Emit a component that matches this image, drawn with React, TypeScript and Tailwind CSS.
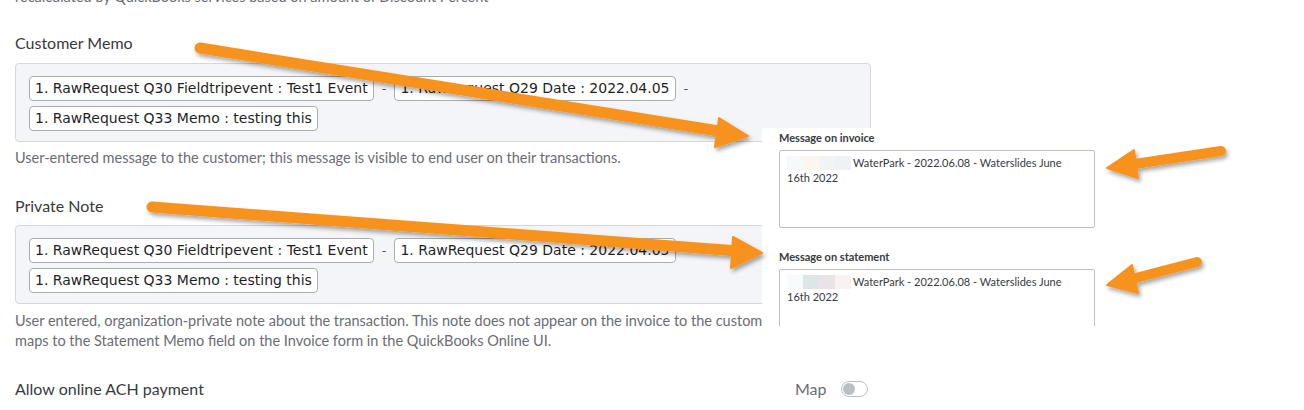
import React from "react";

const ui = { fontFamily: "Lato, 'Open Sans', sans-serif" };
const mono = { fontFamily: "'DejaVu Sans', Verdana, sans-serif" };

function Tag({ children }: { children: React.ReactNode }) {
  return (
    <span
      className="inline-flex h-[25px] items-center rounded-[4px] border border-[#a9acb1] bg-white px-[5px] text-[14px] text-[#1f1f1f] whitespace-nowrap"
      style={mono}
    >
      {children}
    </span>
  );
}

function Dash() {
  return (
    <span className="px-[8px] text-[13px] text-[#555]" style={mono}>
      -
    </span>
  );
}

function TagBox() {
  return (
    <div className="w-[856px] h-[79px] rounded-[4px] border border-[#d4d7dc] bg-[#f4f5f8] px-[13px] pt-[12px]">
      <div className="flex items-center">
        <Tag>1. RawRequest Q30 Fieldtripevent : Test1 Event</Tag>
        <Dash />
        <Tag>1. RawRequest Q29 Date : 2022.04.05</Tag>
        <Dash />
      </div>
      <div className="mt-[5px] flex items-center">
        <Tag>1. RawRequest Q33 Memo : testing this</Tag>
      </div>
    </div>
  );
}

function Redacted({ colors }: { colors: string[] }) {
  return (
    <span className="inline-flex h-[14px] align-[-3px] mr-[2px]">
      {colors.map((c, i) => (
        <span key={i} className="inline-block h-full w-[16px]" style={{ background: c }} />
      ))}
    </span>
  );
}

function MessageField({
  label,
  colors,
  h,
}: {
  label: string;
  colors: string[];
  h: string;
}) {
  return (
    <div>
      <div className="text-[11px] font-bold leading-[14px] text-[#393a3d]">{label}</div>
      <div
        className={`mt-[5px] w-[316px] ${h} rounded-[2px] border border-[#babec5] bg-white px-[7px] pt-[4px] text-[11px] leading-[15px] text-[#393a3d]`}
      >
        <Redacted colors={colors} />
        WaterPark - 2022.06.08 - Waterslides June 16th 2022
      </div>
    </div>
  );
}

function Arrows() {
  const fill = "#f7931e";
  return (
    <svg className="pointer-events-none absolute left-0 top-0" width="1304" height="410">
      <defs>
        <filter id="sh" x="-10%" y="-50%" width="120%" height="200%">
          <feDropShadow dx="2" dy="3" stdDeviation="2" floodColor="#000" floodOpacity="0.35" />
        </filter>
      </defs>
      <g filter="url(#sh)" fill={fill} stroke={fill} strokeLinecap="round" strokeLinejoin="round">
        <line x1="200" y1="48" x2="725" y2="132" strokeWidth="11" />
        <polygon points="748,136 719,118 715,147" strokeWidth="2" />
        <line x1="152" y1="207" x2="738" y2="251" strokeWidth="11" />
        <polygon points="762,253 733,237 731,268" strokeWidth="2" />
        <line x1="1221" y1="151" x2="1128" y2="165" strokeWidth="10" />
        <polygon points="1107,168 1134,150 1138,178" strokeWidth="2" />
        <line x1="1197" y1="262" x2="1128" y2="280" strokeWidth="10" />
        <polygon points="1107,285 1132,265 1138,293" strokeWidth="2" />
      </g>
    </svg>
  );
}

export default function App() {
  return (
    <div className="relative h-[410px] w-[1304px] overflow-hidden bg-white" style={ui}>
      <div className="px-[15px]">
        <p className="-mt-[12px] h-[18px] text-[14.5px] leading-[18px] text-[#6b6c72]">
          recalculated by QuickBooks services based on amount of Discount Percent
        </p>

        <div className="mt-[27px] text-[16px] leading-[20px] text-[#393a3d]">Customer Memo</div>
        <div className="mt-[10px]">
          <TagBox />
        </div>
        <p className="mt-[7px] text-[14.5px] leading-[18px] text-[#6b6c72]">
          User-entered message to the customer; this message is visible to end user on their transactions.
        </p>

        <div className="mt-[29px] text-[16px] leading-[20px] text-[#393a3d]">Private Note</div>
        <div className="mt-[9px]">
          <TagBox />
        </div>
        <p className="mt-[7px] w-[856px] text-[14.5px] leading-[20px] text-[#6b6c72]">
          User entered, organization-private note about the transaction. This note does not appear on the invoice to the customer. This field
          maps to the Statement Memo field on the Invoice form in the QuickBooks Online UI.
        </p>

        <div className="mt-[28px] flex h-[20px] items-center text-[16px] text-[#393a3d]">
          <span className="w-[780px]">Allow online ACH payment</span>
          <span className="text-[#6b6c72]">Map</span>
          <span className="ml-[14px] flex h-[16px] w-[27px] items-center rounded-full border border-[#babec5] bg-white px-[1px]">
            <span className="h-[12px] w-[12px] rounded-full bg-[#babec5]" />
          </span>
        </div>
      </div>

      <div className="absolute left-[762px] top-[128px] h-[198px] w-[340px] overflow-hidden bg-white pl-[17px] pt-[3px]">
        <MessageField
          label="Message on invoice"
          colors={["#f6f8fa", "#fbf6ef", "#f1f3f4", "#eef1f5"]}
          h="h-[78px]"
        />
        <div className="mt-[22px]">
          <MessageField
            label="Message on statement"
            colors={["#f9fafb", "#dde5e8", "#e8e3e5", "#f8f2f1"]}
            h="h-[80px]"
          />
        </div>
      </div>

      <Arrows />
    </div>
  );
}
